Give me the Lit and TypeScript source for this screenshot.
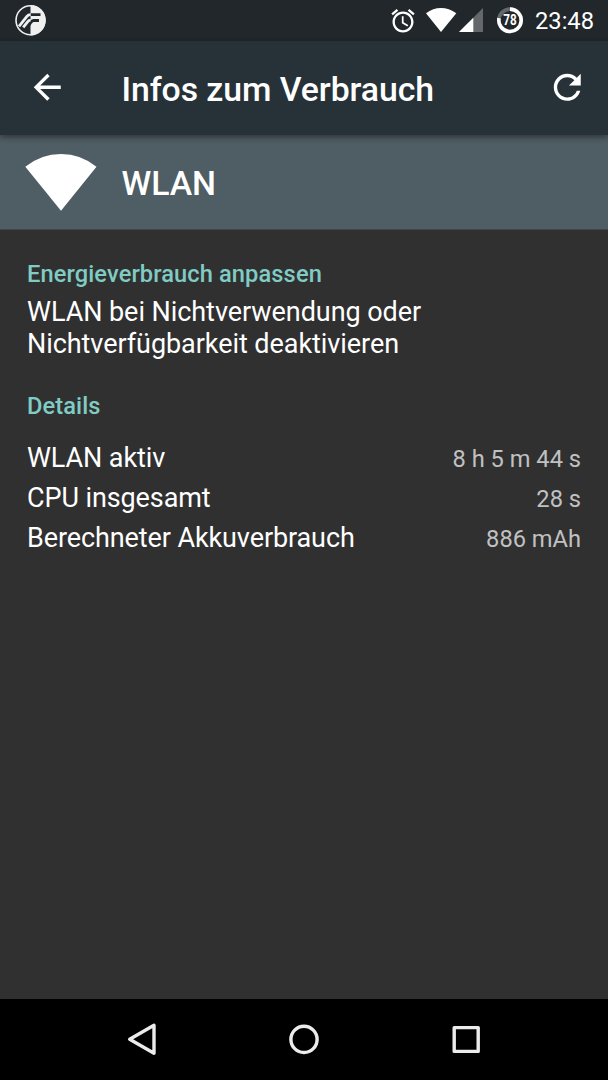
import { LitElement, html, css } from "lit";
import { customElement, property } from "lit/decorators.js";

@customElement("status-bar")
class StatusBar extends LitElement {
  static styles = css`
    :host { display: flex; height: 41px; background: #21272a; color: #fff; padding: 0 14px 0 12px; box-sizing: border-box; }
    .icon { display: block; flex: none; height: 41px; }
    .spacer { flex: 1; }
    .logo { width: 36px; }
    .alarm { width: 28px; margin-right: 8px; }
    .wifi { width: 32px; margin-right: 2px; }
    .cell { width: 25px; margin-right: 12px; }
    .battery { width: 28px; margin-right: 10px; }
    .pct { font: 700 14px Roboto, sans-serif; }
    .clock { font-size: 23.7px; line-height: 42px; width: 60px; text-align: right; white-space: nowrap; }
  `;
  render() {
    return html`
      <svg class="icon logo" viewBox="12 0 36 41">
        <circle cx="30.5" cy="20.3" r="14.5" fill="none" stroke="#f0f0f0" stroke-width="1.6" />
        <path d="M30.5 5.2a15.1 15.1 0 0 1 0 30.2z" fill="#f0f0f0" />
        <path d="M40.5 14.6H30.6M39 20.5H33.5Q32 20.6 30.6 22.6L27 28" fill="none" stroke="#21272a" stroke-width="2.8" />
        <path d="M30.6 14.6Q28.3 14.6 26.9 16.4L19 26.3M30.6 20.2Q28.8 20.3 27.6 21.8L23.2 27.4" fill="none" stroke="#f0f0f0" stroke-width="2.8" />
      </svg>
      <div class="spacer"></div>
      <svg class="icon alarm" viewBox="389 0 28 41">
        <path transform="translate(389 6.8) scale(1.1667)" fill="#fff" d="M22 5.72l-4.6-3.86-1.29 1.53 4.6 3.86L22 5.72zM7.88 3.39L6.6 1.86 2 5.71l1.29 1.53 4.59-3.85zM12.5 8H11v6l4.75 2.85.75-1.23-4-2.37V8zM12 4c-4.97 0-9 4.03-9 9s4.02 9 9 9c4.97 0 9-4.03 9-9s-4.03-9-9-9zm0 16c-3.87 0-7-3.13-7-7s3.13-7 7-7 7 3.13 7 7-3.13 7-7 7z" />
      </svg>
      <svg class="icon wifi" viewBox="425 0 32 41">
        <path d="M426 13.2Q433 8 441 8T456.3 13.2L441 32z" fill="#fff" />
      </svg>
      <svg class="icon cell" viewBox="459 0 25 41">
        <path d="M483 8V32H459z" fill="#64686a" />
        <path d="M473.3 17.7V32H459z" fill="#fff" />
      </svg>
      <svg class="icon battery" viewBox="496 0 28 41">
        <circle cx="510" cy="20.3" r="11.2" fill="none" stroke="#64686a" stroke-width="3.6" />
        <path d="M510 9.1A11.2 11.2 0 1 1 499 18.2" fill="none" stroke="#fff" stroke-width="3.6" />
        <text class="pct" x="510" y="25.2" text-anchor="middle" textLength="13.4" lengthAdjust="spacingAndGlyphs" fill="#fff">78</text>
      </svg>
      <div class="clock">23:48</div>
    `;
  }
}

@customElement("tool-bar")
class ToolBar extends LitElement {
  @property() heading = "";
  static styles = css`
    :host { display: flex; align-items: flex-start; height: 94px; box-sizing: border-box; padding: 26px 21px 0 27px; background: #273238; color: #fff; box-shadow: 0 2px 6px rgba(0, 0, 0, 0.45); z-index: 1; }
    .icon { display: block; width: 40.5px; height: 40.5px; flex: none; fill: #fff; }
    .title { flex: 1; margin: 2.5px 0 0 54px; font-weight: 500; font-size: 33.8px; letter-spacing: -0.07px; line-height: 40px; white-space: nowrap; }
  `;
  render() {
    return html`
      <svg class="icon" viewBox="0 0 24 24"><path d="M20 11H7.83l5.59-5.59L12 4l-8 8 8 8 1.41-1.41L7.83 13H20v-2z" /></svg>
      <div class="title">${this.heading}</div>
      <svg class="icon" viewBox="0 0 24 24"><path d="M17.65 6.35C16.2 4.9 14.21 4 12 4c-4.42 0-7.99 3.58-7.99 8s3.57 8 7.99 8c3.73 0 6.84-2.55 7.73-6h-2.08c-.82 2.33-3.04 4-5.65 4-3.31 0-6-2.69-6-6s2.69-6 6-6c1.66 0 3.14.69 4.22 1.78L13 11h7V4l-2.35 2.35z" /></svg>
    `;
  }
}

@customElement("nav-bar")
class NavBar extends LitElement {
  static styles = css`
    :host { display: flex; justify-content: center; height: 81px; background: #000; }
    .icon { display: block; width: 162px; height: 81px; fill: none; stroke: #ececec; stroke-width: 3.4; stroke-linejoin: round; }
  `;
  render() {
    return html`
      <svg class="icon" viewBox="61 999 162 81"><path d="M154 1025.3V1053.3L129.7 1039.3z" /></svg>
      <svg class="icon" viewBox="223 999 162 81"><circle cx="304" cy="1039.4" r="13.1" /></svg>
      <svg class="icon" viewBox="385 999 162 81"><rect x="454.2" y="1027.6" width="24" height="23.8" /></svg>
    `;
  }
}

@customElement("app-root")
class AppRoot extends LitElement {
  static styles = css`
    :host { display: flex; flex-direction: column; height: 1080px; width: 608px; background: #303030; color: #fff; font-family: Roboto, sans-serif; overflow: hidden; }
    .app { display: flex; height: 94px; flex: none; background: #4f5d64; border-bottom: 1px solid #40474a; }
    .app-icon { display: block; width: 72px; height: 94px; margin-left: 25px; }
    .app-name { margin: 28.5px 0 0 24.6px; font-size: 33.8px; line-height: 40px; font-weight: 500; letter-spacing: -0.1px; }
    .content { flex: 1; padding: 30px 27px 0; }
    .label { color: #80cbc4; font-size: 23.65px; font-weight: 500; line-height: 28px; letter-spacing: 0.1px; }
    .hint { font-size: 27px; line-height: 32px; margin: 8px 0 32px; letter-spacing: -0.06px; }
    .rows { margin-top: 17.5px; }
    .row { display: flex; justify-content: space-between; align-items: baseline; height: 40px; line-height: 40px; font-size: 27px; letter-spacing: -0.1px; }
    .value { font-size: 23.65px; color: #c1c1c1; letter-spacing: 0; }
  `;
  private rows = [
    ["WLAN aktiv", "8 h 5 m 44 s"],
    ["CPU insgesamt", "28 s"],
    ["Berechneter Akkuverbrauch", "886 mAh"],
  ];
  render() {
    return html`
      <status-bar></status-bar>
      <tool-bar heading="Infos zum Verbrauch"></tool-bar>
      <div class="app">
        <svg class="app-icon" viewBox="25 135 72 94"><path d="M25.3 166.8Q41 154 61 154T96.5 166.8L61 210.7z" fill="#fff" /></svg>
        <div class="app-name">WLAN</div>
      </div>
      <div class="content">
        <div class="label">Energieverbrauch anpassen</div>
        <div class="hint">WLAN bei Nichtverwendung oder<br />Nichtverfügbarkeit deaktivieren</div>
        <div class="label">Details</div>
        <div class="rows">
          ${this.rows.map(([name, value]) => html`<div class="row"><span>${name}</span><span class="value">${value}</span></div>`)}
        </div>
      </div>
      <nav-bar></nav-bar>
    `;
  }
}
